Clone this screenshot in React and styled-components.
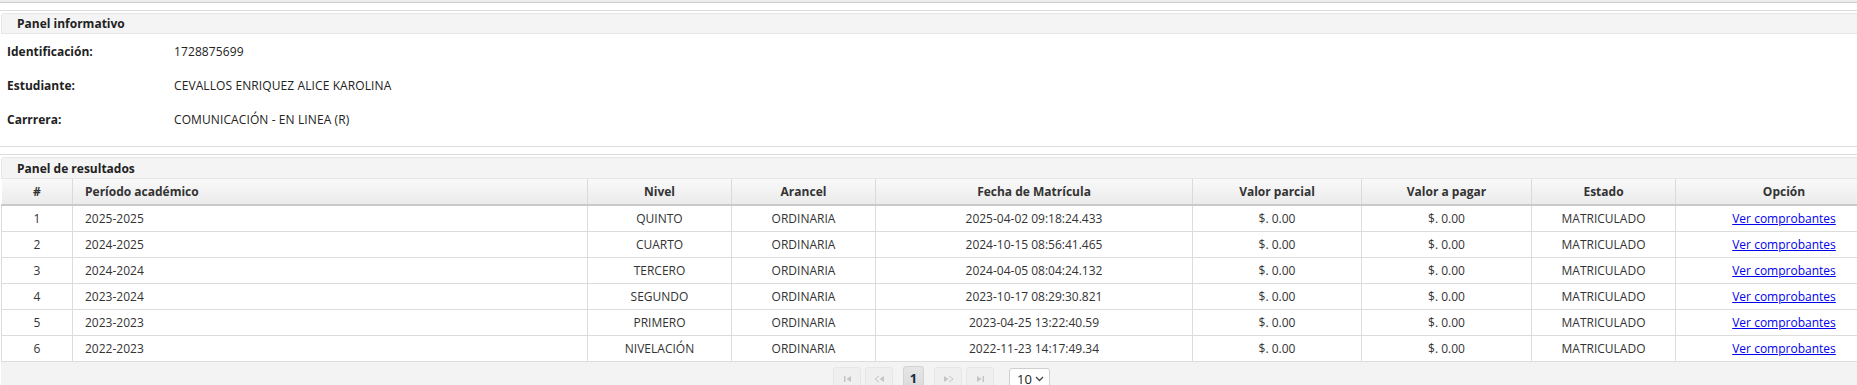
import React from "react";
import styled, { createGlobalStyle } from "styled-components";

const Global = createGlobalStyle`
  html, body { margin: 0; padding: 0; overflow: hidden; background: #fff; }
  body { font-family: "Open Sans", "Noto Sans", sans-serif; font-size: 12px; color: #333; }
`;

const Page = styled.div`
  width: 1892px;
  display: flex;
  flex-direction: column;
`;

const TopStrip = styled.div`
  height: 2px;
  background: #ececec;
  border-bottom: 1px solid #cdcdcd;
`;

const Panel = styled.section`
  margin-top: ${(p) => p.$gap}px;
  border-top: 1px solid #dcdcdc;
  border-bottom: ${(p) => (p.$bottom ? "1px solid #dcdcdc" : "none")};
  padding-top: 2px;
  padding-bottom: ${(p) => p.$padBottom || 0}px;
`;

const PanelHeader = styled.div`
  height: ${(p) => p.$h}px;
  margin-left: 1px;
  box-sizing: border-box;
  background: #f4f4f4;
  border: 1px solid #e6e6e6;
  border-radius: 3px 3px 0 0;
  padding-left: 15px;
  display: flex;
  align-items: center;
  font-weight: 700;
  color: #222;
  font-size: 12px;
`;

const InfoGrid = styled.div`
  display: grid;
  grid-template-columns: 167px 1fr;
  grid-auto-rows: 34px;
  padding-left: 7px;
  align-items: center;
  color: #222;
`;

const Label = styled.div`
  font-weight: 700;
`;

const Value = styled.div`
  letter-spacing: 0.1px;
`;

const Table = styled.table`
  width: 1891px;
  margin-left: 1px;
  border-collapse: collapse;
  table-layout: fixed;
  border-left: 1px solid #dcdcdc;
`;

const Th = styled.th`
  height: 26px;
  box-sizing: border-box;
  padding: 0 ${(p) => (p.$left ? "12px" : "4px")};
  text-align: ${(p) => (p.$left ? "left" : "center")};
  font-weight: 700;
  color: #333;
  background: linear-gradient(#f9f9f9, #ebebeb);
  border-right: 1px solid #dadada;
  border-bottom: 2px solid #c9c9c9;
  border-left: 1px solid #fff;
`;

const Td = styled.td`
  height: 26px;
  box-sizing: border-box;
  padding: 0 ${(p) => (p.$left ? "12px" : "4px")};
  text-align: ${(p) => (p.$left ? "left" : "center")};
  color: #333;
  border-right: 1px solid #dcdcdc;
  border-bottom: 1px solid #dcdcdc;
  white-space: nowrap;
`;

const Link = styled.a`
  color: #0000ee;
  text-decoration: underline;
  cursor: pointer;
`;

const Footer = styled.div`
  background: #f3f3f3;
  height: 32px;
  display: flex;
  justify-content: center;
  align-items: flex-start;
  padding: 4px 10px 0 0;
  box-sizing: border-box;
  margin-left: 1px;
`;

const Pager = styled.div`
  display: flex;
  align-items: flex-start;
`;

const NavBtn = styled.button`
  width: 28px;
  height: 24px;
  margin-top: 1px;
  margin-left: ${(p) => p.$ml}px;
  padding: 0;
  box-sizing: border-box;
  border: 1px solid #e6e6e6;
  border-radius: 3px;
  background: #efefef;
  display: flex;
  align-items: center;
  justify-content: center;
`;

const PageBtn = styled.button`
  width: 21px;
  height: 25px;
  margin-left: ${(p) => p.$ml}px;
  padding: 0;
  box-sizing: border-box;
  border: 1px solid #d2d2d2;
  border-radius: 3px;
  background: linear-gradient(#e6e6e6, #d9d9d9);
  font-family: "Open Sans", sans-serif;
  font-weight: 700;
  font-size: 13px;
  color: #1c2a3a;
`;

const Select = styled.div`
  width: 41px;
  height: 22px;
  margin-top: 2px;
  margin-left: 15px;
  box-sizing: border-box;
  border: 1px solid #cfcfcf;
  border-radius: 3px;
  background: #fff;
  display: flex;
  align-items: center;
  justify-content: space-between;
  padding: 0 5px 0 7px;
  font-size: 13px;
  color: #222;
`;

const Ico = ({ kind }) => {
  const c = "#c4c4c4";
  const shapes = {
    first: (
      <>
        <rect x="1" y="1" width="1.4" height="6" fill={c} />
        <path d="M8 1 L3.5 4 L8 7 Z" fill={c} />
      </>
    ),
    prev: (
      <>
        <path d="M5 1 L1 4 L5 7" fill="none" stroke={c} strokeWidth="1" />
        <path d="M10 1 L5.5 4 L10 7 Z" fill={c} />
      </>
    ),
    next: (
      <>
        <path d="M1 1 L5.5 4 L1 7 Z" fill={c} />
        <path d="M6 1 L10 4 L6 7" fill="none" stroke={c} strokeWidth="1" />
      </>
    ),
    last: (
      <>
        <path d="M1 1 L5.5 4 L1 7 Z" fill={c} />
        <rect x="6.6" y="1" width="1.4" height="6" fill={c} />
      </>
    ),
  };
  const w = kind === "prev" || kind === "next" ? 11 : 9;
  return (
    <svg width={w} height="8" viewBox={`0 0 ${w} 8`}>
      {shapes[kind]}
    </svg>
  );
};

const Chevron = () => (
  <svg width="9" height="6" viewBox="0 0 9 6">
    <path d="M1 1 L4.5 4.5 L8 1" fill="none" stroke="#444" strokeWidth="1.3" />
  </svg>
);

const cols = [71, 515, 144, 144, 317, 169, 170, 144, 217];
const headers = [
  "#",
  "Período académico",
  "Nivel",
  "Arancel",
  "Fecha de Matrícula",
  "Valor parcial",
  "Valor a pagar",
  "Estado",
  "Opción",
];

const rows = [
  ["1", "2025-2025", "QUINTO", "2025-04-02 09:18:24.433"],
  ["2", "2024-2025", "CUARTO", "2024-10-15 08:56:41.465"],
  ["3", "2024-2024", "TERCERO", "2024-04-05 08:04:24.132"],
  ["4", "2023-2024", "SEGUNDO", "2023-10-17 08:29:30.821"],
  ["5", "2023-2023", "PRIMERO", "2023-04-25 13:22:40.59"],
  ["6", "2022-2023", "NIVELACIÓN", "2022-11-23 14:17:49.34"],
];

export default function App() {
  return (
    <Page>
      <Global />
      <TopStrip />
      <Panel $gap={7} $bottom $padBottom={10}>
        <PanelHeader $h={21}>Panel informativo</PanelHeader>
        <InfoGrid>
          <Label>Identificación:</Label>
          <Value>1728875699</Value>
          <Label>Estudiante:</Label>
          <Value>CEVALLOS ENRIQUEZ ALICE KAROLINA</Value>
          <Label>Carrrera:</Label>
          <Value>COMUNICACIÓN - EN LINEA (R)</Value>
        </InfoGrid>
      </Panel>
      <Panel $gap={7}>
        <PanelHeader $h={22}>Panel de resultados</PanelHeader>
        <Table>
          <colgroup>
            {cols.map((w, i) => (
              <col key={i} style={{ width: w }} />
            ))}
          </colgroup>
          <thead>
            <tr>
              {headers.map((h, i) => (
                <Th key={h} $left={i === 1}>
                  {h}
                </Th>
              ))}
            </tr>
          </thead>
          <tbody>
            {rows.map((r) => (
              <tr key={r[0]}>
                <Td>{r[0]}</Td>
                <Td $left>{r[1]}</Td>
                <Td>{r[2]}</Td>
                <Td>ORDINARIA</Td>
                <Td>{r[3]}</Td>
                <Td>$. 0.00</Td>
                <Td>$. 0.00</Td>
                <Td>MATRICULADO</Td>
                <Td>
                  <Link>Ver comprobantes</Link>
                </Td>
              </tr>
            ))}
          </tbody>
        </Table>
        <Footer>
          <Pager>
            <NavBtn $ml={0} aria-label="first">
              <Ico kind="first" />
            </NavBtn>
            <NavBtn $ml={4} aria-label="prev">
              <Ico kind="prev" />
            </NavBtn>
            <PageBtn $ml={10}>1</PageBtn>
            <NavBtn $ml={10} aria-label="next">
              <Ico kind="next" />
            </NavBtn>
            <NavBtn $ml={4} aria-label="last">
              <Ico kind="last" />
            </NavBtn>
            <Select>
              <span>10</span>
              <Chevron />
            </Select>
          </Pager>
        </Footer>
      </Panel>
    </Page>
  );
}
